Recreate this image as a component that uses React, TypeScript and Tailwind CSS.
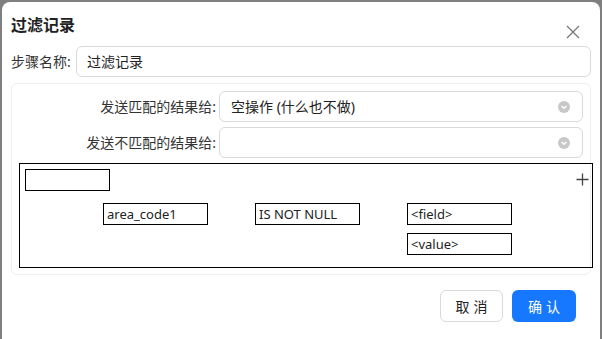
import React from "react";

const font = { fontFamily: '"Noto Sans", "Noto Sans CJK SC", sans-serif' };

function Chevron() {
  return (
    <svg width="14" height="14" viewBox="0 0 14 14">
      <circle cx="7" cy="7" r="6" fill="#c8c8c8" />
      <path d="M4.6 6 L7 8.3 L9.4 6" stroke="#fff" strokeWidth="1.4" fill="none" />
    </svg>
  );
}

function Box({ text, className = "" }: { text?: string; className?: string }) {
  return (
    <div className={`w-[105px] h-[22px] border border-black bg-white text-[13px] leading-[20px] pl-[3px] text-[#222] ${className}`}>
      {text}
    </div>
  );
}

export default function App() {
  return (
    <div className="w-[602px] h-[339px] bg-[#7f7f7f] pt-[2px] pl-[2px] pr-[2px] overflow-hidden" style={font}>
      <div className="bg-white rounded-t-[8px] h-[400px] pl-[9px] pr-[9px] pt-[10px]">
        <div className="flex items-center justify-between h-[26px]">
          <div className="text-[16px] font-bold text-[#222]">过滤记录</div>
          <svg width="14" height="14" viewBox="0 0 14 14" className="mr-[11px] mt-[13px]">
            <path d="M1 1 L13 13 M13 1 L1 13" stroke="#777" strokeWidth="1.3" />
          </svg>
        </div>
        <div className="flex items-center mt-[8px]">
          <div className="text-[14px] text-[#333] w-[65px]">步骤名称:</div>
          <div className="flex-1 h-[31px] border border-[#d9d9d9] rounded-[6px] flex items-center px-[10px] text-[14px] text-[#222]">
            过滤记录
          </div>
        </div>
        <div className="mt-[6px] border border-[#eeeeee] rounded-[6px] h-[192px] pt-[7px] pl-[7px] pr-0 relative">
          <div className="flex items-center">
            <div className="w-[200px] text-right text-[14px] text-[#333] pr-[3px]">发送匹配的结果给:</div>
            <div className="w-[364px] h-[31px] border border-[#d9d9d9] rounded-[6px] flex items-center justify-between px-[11px] text-[14px] text-[#222]">
              <span>空操作 (什么也不做)</span>
              <Chevron />
            </div>
          </div>
          <div className="flex items-center mt-[5px]">
            <div className="w-[200px] text-right text-[14px] text-[#333] pr-[3px]">发送不匹配的结果给:</div>
            <div className="w-[364px] h-[31px] border border-[#d9d9d9] rounded-[6px] flex items-center justify-end px-[11px]">
              <Chevron />
            </div>
          </div>
          <div className="mt-[5px] border border-black h-[105px] w-[574px] relative pl-[5px] pt-[5px]">
            <div className="w-[85px] h-[22px] border border-black" />
            <div className="absolute right-[3px] top-[9px]">
              <svg width="13" height="13" viewBox="0 0 13 13">
                <path d="M6.5 0.5 V12.5 M0.5 6.5 H12.5" stroke="#444" strokeWidth="1.3" />
              </svg>
            </div>
            <div className="flex mt-[12px] pl-[78px] gap-[47px]">
              <Box text="area_code1" />
              <Box text="IS NOT NULL" />
              <div className="flex flex-col gap-[8px]">
                <Box text="<field>" />
                <Box text="<value>" />
              </div>
            </div>
          </div>
        </div>
        <div className="flex justify-end gap-[9px] mt-[15px] pr-[15px]">
          <button className="w-[63px] h-[32px] border border-[#d9d9d9] rounded-[6px] text-[14px] text-[#222] bg-white tracking-[4px] pl-[4px]">取消</button>
          <button className="w-[64px] h-[32px] rounded-[6px] text-[14px] text-white bg-[#1677ff] tracking-[4px] pl-[4px]">确认</button>
        </div>
      </div>
    </div>
  );
}
